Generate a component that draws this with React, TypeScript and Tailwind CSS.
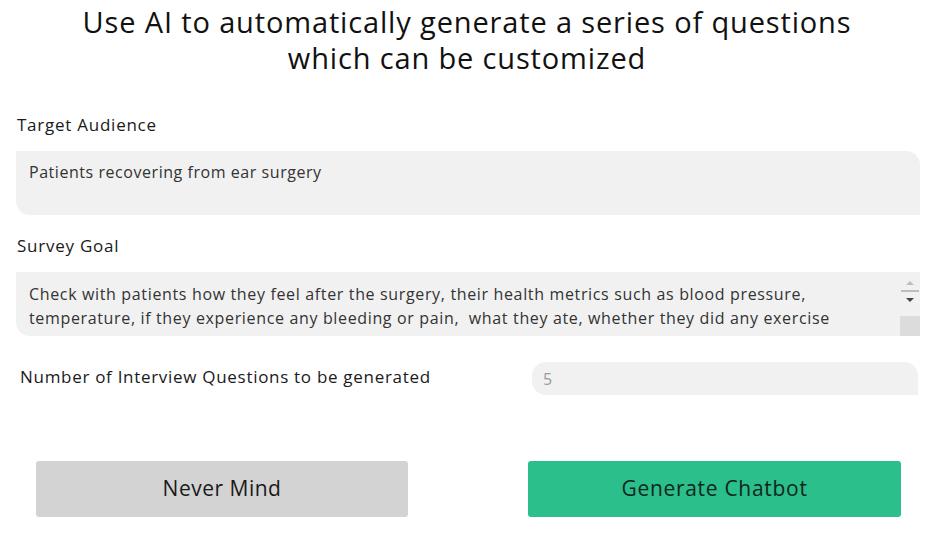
import React from "react";

const font = { fontFamily: '"Open Sans", "Liberation Sans", sans-serif' };

const App: React.FC = () => (
  <div className="w-[934px] h-[534px] bg-white text-[#222] overflow-hidden" style={font}>
    <h1 className="pt-[4px] text-center text-[29px] leading-[36px] text-[#111] tracking-[0.85px]">
      Use AI to automatically generate a series of questions
      <br />
      which can be customized
    </h1>

    <div className="pl-[16px] pr-[14px] mt-[38px]">
      <p className="pl-[1px] text-[17px] leading-[22px] tracking-[0.75px] text-[#1a1a1a]">Target Audience</p>
      <div className="mt-[15px] h-[64px] bg-[#f1f1f1] rounded-bl-[14px] rounded-tr-[14px] px-[13px] pt-[9px] text-[16px] tracking-[0.55px] text-[#333]">
        Patients recovering from ear surgery
      </div>

      <p className="mt-[20px] pl-[1px] text-[17px] leading-[22px] tracking-[0.75px] text-[#1a1a1a]">Survey Goal</p>
      <div className="mt-[15px] h-[64px] bg-[#f1f1f1] rounded-bl-[14px] flex">
        <div className="flex-1 px-[13px] pt-[10px] text-[16px] leading-[24px] tracking-[0.65px] text-[#333] whitespace-nowrap">
          Check with patients how they feel after the surgery, their health metrics such as blood pressure,
          <br />
          temperature, if they experience any bleeding or pain,&nbsp; what they ate, whether they did any exercise
        </div>
        <div className="w-[20px] flex flex-col items-center pt-[7px]">
          <svg width="12" height="8" viewBox="0 0 12 8">
            <path d="M2 6 L6 2 L10 6 Z" fill="#bdbdbd" />
          </svg>
          <div className="mt-[3px] w-[18px] h-[2px] bg-[#bdbdbd]" />
          <svg width="12" height="8" viewBox="0 0 12 8" className="mt-[4px]">
            <path d="M2 2 L10 2 L6 6 Z" fill="#444" />
          </svg>
          <div className="mt-[auto] w-[20px] h-[20px] bg-[#dcdcdc]" />
        </div>
      </div>

      <div className="mt-[26px] flex items-start">
        <p className="pl-[4px] pt-[3px] w-[516px] text-[17px] leading-[24px] tracking-[0.7px] text-[#1a1a1a]">
          Number of Interview Questions to be generated
        </p>
        <div className="w-[386px] h-[33px] bg-[#f1f1f1] rounded-l-[14px] rounded-tr-[14px] pl-[11px] flex items-center text-[16px] text-[#9a9a9a]">
          5
        </div>
      </div>
    </div>

    <div className="mt-[66px] flex pl-[36px] gap-[120px]">
      <button className="w-[372px] h-[56px] bg-[#d3d3d3] rounded-[3px] text-[21px] tracking-[0.5px] text-[#1a1a1a]">
        Never Mind
      </button>
      <button className="w-[373px] h-[56px] bg-[#2abf8b] rounded-[3px] text-[21px] tracking-[0.7px] text-[#10261d]">
        Generate Chatbot
      </button>
    </div>
  </div>
);

export default App;
